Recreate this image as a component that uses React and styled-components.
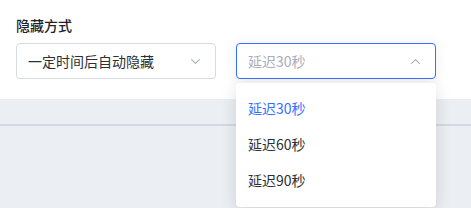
import React, { useState } from "react";
import styled, { createGlobalStyle } from "styled-components";

const Global = createGlobalStyle`
  html, body { margin: 0; padding: 0; }
  body {
    background: #ebeef2;
    font-family: "Noto Sans CJK SC", "Noto Sans", sans-serif;
    color: #1d2129;
  }
`;

const Page = styled.div`
  width: 471px;
  height: 208px;
  overflow: hidden;
  background: #ebeef2;
`;

const Panel = styled.div`
  background: #fff;
  height: 99px;
  box-sizing: border-box;
  padding: 15px 16px 0;
`;

const Label = styled.div`
  font-size: 14px;
  font-weight: 500;
  line-height: 20px;
  color: #1d2129;
`;

const Row = styled.div`
  display: flex;
  gap: 20px;
  margin-top: 8px;
`;

const Field = styled.div`
  position: relative;
  width: 200px;
`;

const Trigger = styled.div`
  height: 36px;
  box-sizing: border-box;
  border: 1px solid ${(p) => (p.$open ? "#3370ff" : "#d6dae3")};
  border-radius: 4px;
  display: flex;
  align-items: center;
  justify-content: space-between;
  padding: 0 15px 0 11px;
  font-size: 14px;
  color: ${(p) => (p.$placeholder ? "#a8adb8" : "#2b2f36")};
  background: #fff;
  box-shadow: ${(p) => (p.$open ? "0 2px 14px rgba(31, 35, 41, 0.08)" : "none")};
`;

const Menu = styled.div`
  position: absolute;
  top: 40px;
  left: 0;
  width: 200px;
  background: #fff;
  border-radius: 4px;
  padding: 7px 0 9px;
  box-shadow: 0 4px 16px rgba(31, 35, 41, 0.14);
  z-index: 2;
`;

const Option = styled.div`
  height: 36px;
  display: flex;
  align-items: center;
  padding: 0 12px;
  font-size: 14px;
  color: ${(p) => (p.$active ? "#3370ff" : "#2b2f36")};
`;

const Strip = styled.div`
  height: 25px;
  border-bottom: 2px solid #d4d8e3;
`;

const Chevron = ({ up }) => (
  <svg width="9" height="5" viewBox="0 0 9 5" fill="none">
    <path
      d={up ? "M0.6 4.4 L4.5 0.6 L8.4 4.4" : "M0.6 0.6 L4.5 4.4 L8.4 0.6"}
      stroke="#a9aeb8"
      strokeWidth="1.1"
      strokeLinecap="round"
      strokeLinejoin="round"
    />
  </svg>
);

const options = ["延迟30秒", "延迟60秒", "延迟90秒"];

export default function App() {
  const [value] = useState(options[0]);
  return (
    <Page>
      <Global />
      <Panel>
        <Label>隐藏方式</Label>
        <Row>
          <Field>
            <Trigger>
              一定时间后自动隐藏
              <Chevron />
            </Trigger>
          </Field>
          <Field>
            <Trigger $open $placeholder>
              {value}
              <Chevron up />
            </Trigger>
            <Menu>
              {options.map((o) => (
                <Option key={o} $active={o === value}>
                  {o}
                </Option>
              ))}
            </Menu>
          </Field>
        </Row>
      </Panel>
      <Strip />
    </Page>
  );
}
